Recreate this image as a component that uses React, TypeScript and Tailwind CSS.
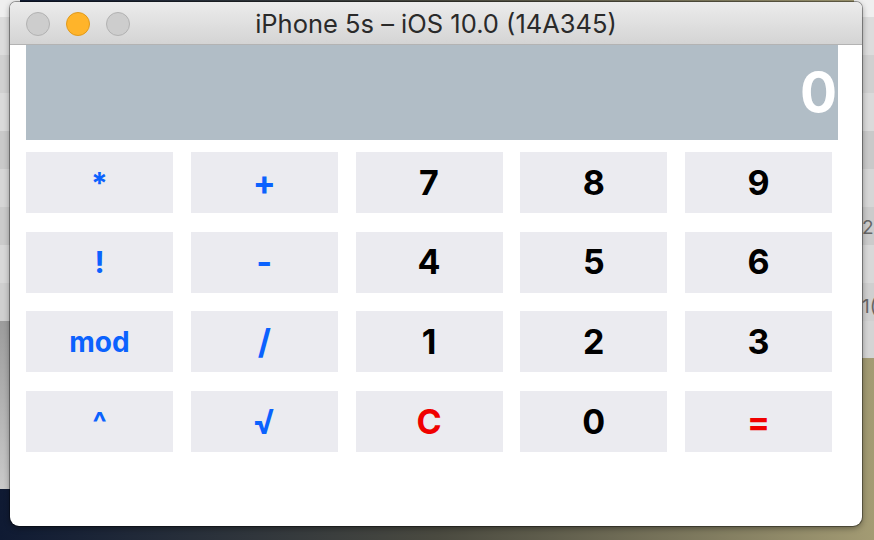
import React from "react"

type Key = { label: string; tone: "op" | "num" | "red"; size: string }

const keys: Key[] = [
  { label: "*", tone: "op", size: "text-[30px]" },
  { label: "+", tone: "op", size: "text-[34px]" },
  { label: "7", tone: "num", size: "text-[34px]" },
  { label: "8", tone: "num", size: "text-[34px]" },
  { label: "9", tone: "num", size: "text-[34px]" },
  { label: "!", tone: "op", size: "text-[30px]" },
  { label: "-", tone: "op", size: "text-[34px]" },
  { label: "4", tone: "num", size: "text-[34px]" },
  { label: "5", tone: "num", size: "text-[34px]" },
  { label: "6", tone: "num", size: "text-[34px]" },
  { label: "mod", tone: "op", size: "text-[28px]" },
  { label: "/", tone: "op", size: "text-[34px]" },
  { label: "1", tone: "num", size: "text-[34px]" },
  { label: "2", tone: "num", size: "text-[34px]" },
  { label: "3", tone: "num", size: "text-[34px]" },
  { label: "^", tone: "op", size: "text-[30px]" },
  { label: "√", tone: "op", size: "text-[34px]" },
  { label: "C", tone: "red", size: "text-[34px]" },
  { label: "0", tone: "num", size: "text-[34px]" },
  { label: "=", tone: "red", size: "text-[34px]" },
]

const toneClass = {
  op: "text-[#0b62fe]",
  num: "text-black",
  red: "text-[#f00000]",
}

const Stripes = () => (
  <div className="flex flex-col">
    <div className="h-[17px] bg-[#efefef]" />
    <div className="h-[38px] bg-[#dcdcdc]" />
    <div className="h-[38px] bg-[#d0d0d0]" />
    <div className="h-[38px] bg-[#dadada]" />
    <div className="h-[38px] bg-[#c9c9c9]" />
    <div className="h-[38px] bg-[#d6d6d6]" />
    <div className="h-[38px] bg-[#cbcbcb]" />
    <div className="h-[38px] bg-[#d8d8d8]" />
    <div className="h-[38px] bg-[#cfcfcf]" />
  </div>
)

export default function App() {
  return (
    <div className="relative w-[874px] h-[540px] overflow-hidden bg-gradient-to-r from-[#0f1a33] via-[#4a4a40] to-[#a39b73] font-['Inter','Liberation_Sans',sans-serif]">
      {/* windows behind */}
      <div className="absolute left-0 top-0 w-[20px] h-[489px] flex flex-col">
        <Stripes />
        <div className="flex-1 bg-gradient-to-b from-[#9c9c9c] to-[#c9c9c9]" />
      </div>
      <div className="absolute right-0 top-0 w-[20px] h-[358px] flex flex-col bg-[#d4d4d4]">
        <Stripes />
        <div className="absolute left-[8px] top-[214px] text-[19px] text-[#666]">2</div>
        <div className="absolute left-[8px] top-[293px] text-[19px] text-[#666]">1(</div>
      </div>

      {/* simulator window */}
      <div className="absolute left-[10px] top-[2px] w-[852px] h-[524px] flex flex-col rounded-t-[6px] rounded-b-[9px] bg-white overflow-hidden shadow-[0_0_0_1px_rgba(0,0,0,0.35),0_2px_6px_rgba(0,0,0,0.4)]">
        <div className="relative h-[43px] shrink-0 flex items-center bg-gradient-to-b from-[#ececec] to-[#d4d4d4] border-b border-[#b3b3b3]">
          <div className="flex gap-[16px] pl-[16px] pt-[1px]">
            <div className="w-[24px] h-[24px] rounded-full bg-[#cdcdcd] border border-[#b2b2b2]" />
            <div className="w-[24px] h-[24px] rounded-full bg-[#ffb42a] border border-[#e09a1c]" />
            <div className="w-[24px] h-[24px] rounded-full bg-[#cdcdcd] border border-[#b2b2b2]" />
          </div>
          <div className="absolute inset-0 flex items-center justify-center pt-[2px] text-[25.5px] text-[#2a2a2a] font-['Inter','Liberation_Sans',sans-serif]">
            iPhone 5s – iOS 10.0 (14A345)
          </div>
        </div>

        <div className="flex flex-col pl-[16px]">
          <div className="w-[812px] h-[95px] bg-[#b1bdc6] flex items-center justify-end pr-[1px]">
            <span className="text-[55px] font-bold text-white leading-none">0</span>
          </div>
          <div className="mt-[12px] w-[806px] grid grid-cols-5 gap-x-[17.75px] gap-y-[18.7px]">
            {keys.map((k) => (
              <div
                key={k.label}
                className={`h-[61px] bg-[#ebebf0] flex items-center justify-center font-bold leading-none ${k.size} ${toneClass[k.tone]}`}
              >
                {k.label}
              </div>
            ))}
          </div>
        </div>
      </div>
    </div>
  )
}
